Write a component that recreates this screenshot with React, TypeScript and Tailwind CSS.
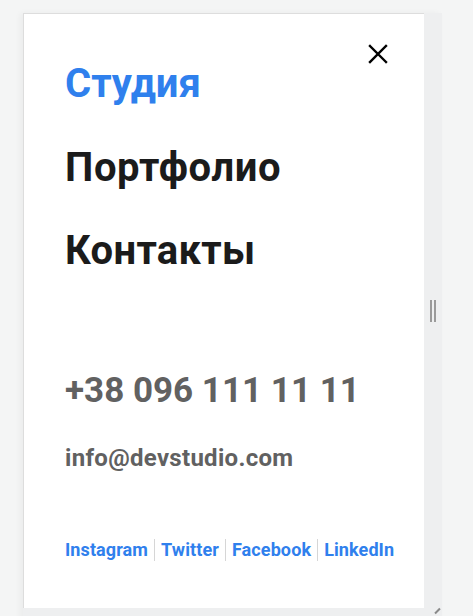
import React from "react"

const socials = ["Instagram", "Twitter", "Facebook", "LinkedIn"]

function CloseIcon() {
  return (
    <svg width="20" height="20" viewBox="0 0 20 20" fill="none">
      <path d="M2 2 L18 18 M18 2 L2 18" stroke="#000" strokeWidth="2.4" strokeLinecap="square" />
    </svg>
  )
}

export default function App() {
  return (
    <div
      className="relative h-[616px] w-[473px] overflow-hidden bg-[#f4f5f5]"
      style={{ fontFamily: "Roboto, 'Liberation Sans', sans-serif" }}
    >
      {/* ── Frame ── */}
      <div className="absolute left-[23px] top-[13px] flex h-[620px] w-[419px] bg-[#eeeff0] shadow-[-3px_0_6px_rgba(0,0,0,0.04)]">
        <div className="relative h-[595px] w-[401px] border-l border-t border-[#dddddd] bg-white pl-[41px] pt-[50px]">
          <button className="absolute right-[36px] top-[30px]">
            <CloseIcon />
          </button>

          {/* ── Nav ── */}
          <nav className="flex flex-col">
            <a className="text-[40px] font-bold leading-none text-[#2f80ed]">Студия</a>
            <a className="mt-[44px] text-[40px] font-bold leading-none tracking-[0.6px] text-[#1b1b1b]">Портфолио</a>
            <a className="mt-[43px] text-[40px] font-bold leading-none tracking-[0.3px] text-[#1b1b1b]">Контакты</a>
          </nav>

          {/* ── Contacts ── */}
          <div className="mt-[102px] text-[35px] font-bold leading-none text-[#616161]">
            +38 096 111 11 11
          </div>
          <div className="mt-[38px] text-[24px] font-bold leading-none tracking-[0.3px] text-[#616161]">
            info@devstudio.com
          </div>

          {/* ── Socials ── */}
          <div className="mt-[69px] flex items-center text-[18px] font-bold leading-none tracking-[0.1px] text-[#2f80ed]">
            {socials.map((s, i) => (
              <React.Fragment key={s}>
                {i > 0 && <span className="mx-[6px] h-[22px] w-px bg-[#d6d6d6]" />}
                <a>{s}</a>
              </React.Fragment>
            ))}
          </div>
        </div>

        {/* ── Drag handle ── */}
        <div className="flex h-[595px] w-[18px] items-center justify-center gap-[2px]">
          <span className="h-[22px] w-[2px] bg-[#9a9a9a]" />
          <span className="h-[22px] w-[2px] bg-[#9a9a9a]" />
        </div>

        <span className="absolute left-[411px] top-[597px] h-[2px] w-[7px] -rotate-45 bg-[#8a8a8a]" />
      </div>
    </div>
  )
}
